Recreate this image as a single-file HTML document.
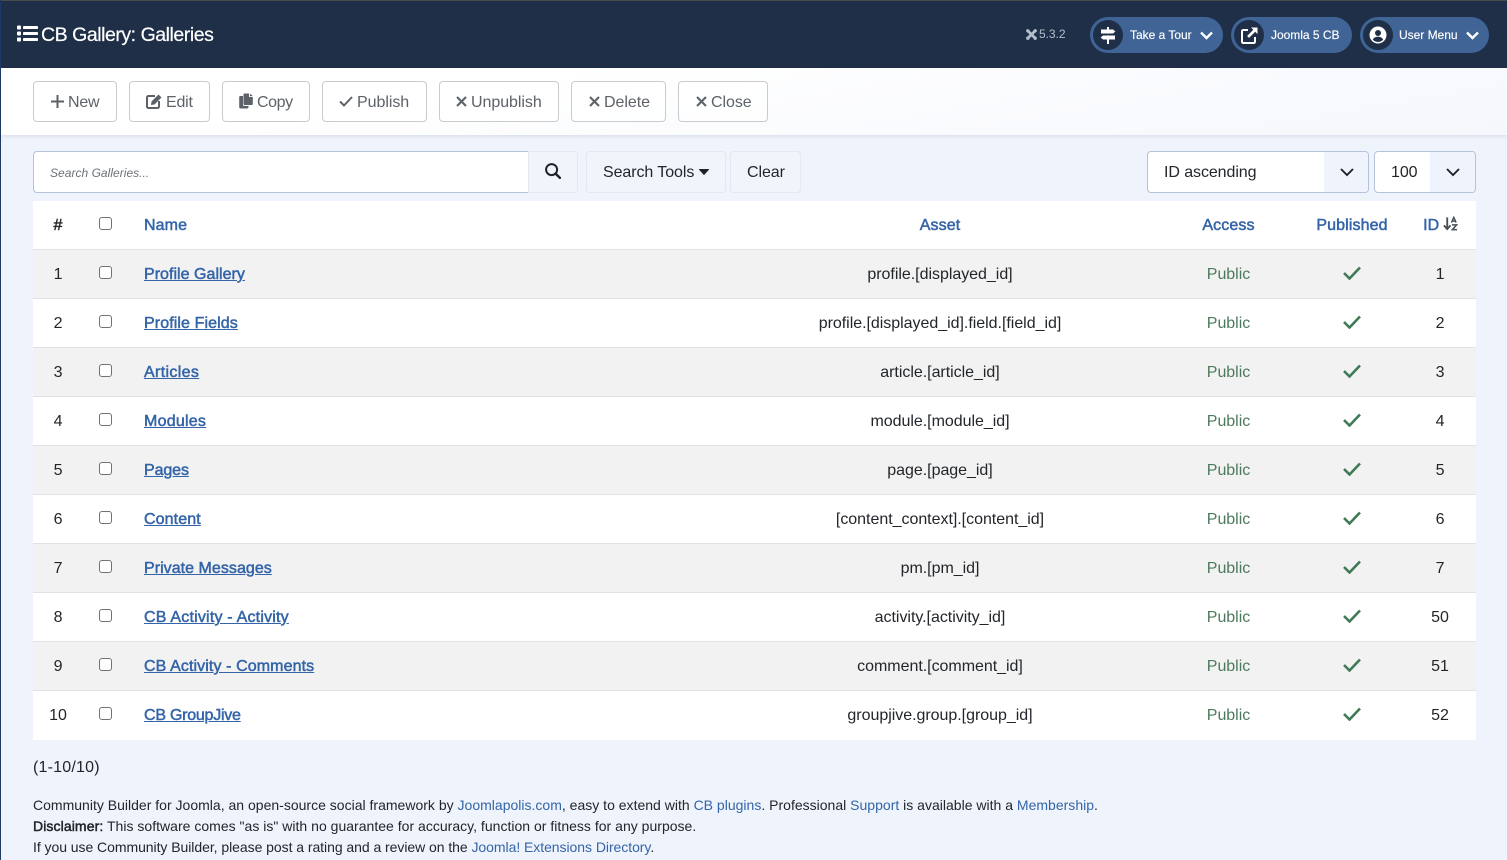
<!DOCTYPE html>
<html lang="en"><head><meta charset="utf-8"><title>CB Gallery: Galleries</title>
<style>
*{box-sizing:border-box}
html,body{margin:0;padding:0}
body{width:1507px;height:860px;overflow:hidden;position:relative;background:#eff3fb;font-family:"Liberation Sans",sans-serif;font-size:16px;color:#22262a}
.a{position:absolute;white-space:nowrap}
svg{position:absolute;display:block}
#edge{left:0;top:0;width:1px;height:860px;background:#1f3a64}
#hdr{left:0;top:0;width:1507px;height:68px;background:#1e2f47;border-top:1px solid #4a4a4a}
#ttl{left:41px;top:23px;font-size:19.5px;line-height:24px;color:#fff;letter-spacing:-.46px;-webkit-text-stroke:.2px #fff}
#ver{left:1039px;top:27px;font-size:12px;line-height:15px;color:#b5bfcc;letter-spacing:-.05px}
.pill{top:17px;height:36px;border-radius:18px;background:#3f6495}
.pc{top:20px;width:30px;height:30px;border-radius:50%;background:#1e2f47}
.pt{top:28px;font-size:12px;line-height:15px;color:#fff;letter-spacing:-.02px;-webkit-text-stroke:.15px #fff}
#bar{left:1px;top:68px;width:1506px;height:67px;background:linear-gradient(170deg,#fff 30%,#f5f7fc 100%);box-shadow:0 1px 4px rgba(30,50,90,.12)}
.btn{top:81px;height:41px;border:1px solid #c8ccd0;border-radius:4px;background:rgba(255,255,255,.75)}
.bt{top:93px;line-height:19px;color:#5c6268;letter-spacing:-.05px}
#srch{left:33px;top:151px;width:496px;height:42px;background:#fff;border:1px solid #b4c2dc;border-right:1px solid #d8dfe9;border-radius:4px 0 0 4px}
#ph{left:50px;top:166px;font-size:12px;line-height:15px;font-style:italic;color:#6c7278;letter-spacing:.03px}
.gb{top:151px;height:42px;background:#f1f4fa;border:1px solid #e4e8f0;border-radius:4px;line-height:19px}
.gt{top:163px;line-height:19px;color:#22262a;letter-spacing:-.08px}
.sel{top:151px;height:42px;border:1px solid #b4c2dc;border-radius:4px;background:#fff;overflow:hidden}
.sel i{position:absolute;top:0;bottom:0;right:0;background:#eff3fb}
table{position:absolute;left:33px;top:200px;width:1443px;border-collapse:collapse;table-layout:fixed;background:#fff}
th,td{padding:2px 0 0;text-align:center;font-size:16px;line-height:19px;height:49px;border-bottom:1px solid #dfe3e7;letter-spacing:-.03px;font-weight:400;color:#22262a}
th{color:#3465a8;letter-spacing:.1px;-webkit-text-stroke:.5px #3465a8}
th.h{color:#22262a;-webkit-text-stroke:.5px #22262a}
tr:last-child td{border-bottom-color:#fff}
tbody tr:nth-child(odd) td{background:#f2f2f2}
td.l,th.l{text-align:left;padding-left:16px}
td a{color:#3465a8;letter-spacing:.1px;text-decoration:underline;-webkit-text-stroke:.5px #3465a8}
td.g{color:#4d7a5c}
td svg,th svg{position:relative;display:inline-block;vertical-align:middle;top:-2px}
.cb{display:inline-block;width:13px;height:13px;border:1px solid #6f7276;border-radius:3px;background:#fff;vertical-align:middle;position:relative;top:-2px;-webkit-text-stroke:0}
#strip{left:33px;top:200px;width:1443px;height:1px;background:#eff3fb}
#cnt{left:33px;top:758px;line-height:19px;letter-spacing:.2px}
.f{left:33px;font-size:14px;line-height:21px}
.f a{color:#3465a8;text-decoration:none}
.f b{font-weight:400;letter-spacing:.1px;-webkit-text-stroke:.5px #22262a}
</style></head><body>
<div class="a" id="hdr"></div>
<div class="a" id="edge"></div>
<svg style="left:17px;top:25px" width="21" height="17" viewBox="0 0 21 17"><g fill="#fff"><rect x="0" y="0.5" width="4" height="4" rx="1"/><rect x="0" y="6.5" width="4" height="4" rx="1"/><rect x="0" y="12.5" width="4" height="4" rx="1"/><rect x="6" y="1" width="15" height="3" rx=".8"/><rect x="6" y="7" width="15" height="3" rx=".8"/><rect x="6" y="13" width="15" height="3" rx=".8"/></g></svg>
<div class="a" id="ttl">CB Gallery: Galleries</div>
<svg style="left:1026px;top:29px" width="11" height="11" viewBox="0 0 11 11"><g stroke="#b5bfcc" stroke-width="2.800" stroke-linecap="round"><path d="M2.500 2.500l6 6M8.500 2.500l-6 6"/></g><g fill="#b5bfcc"><circle cx="1.800" cy="1.800" r="1.700"/><circle cx="9.200" cy="1.800" r="1.700"/><circle cx="1.800" cy="9.200" r="1.700"/><circle cx="9.200" cy="9.200" r="1.700"/></g></svg>
<div class="a" id="ver">5.3.2</div>

<div class="a pill" style="left:1090px;width:133px"></div>
<div class="a pc" style="left:1093px"></div>
<svg style="left:1100px;top:27px" width="16" height="17" viewBox="0 0 16 17"><g fill="#fff"><rect x="7" y="0" width="2" height="17"/><path d="M1 2.500h12l2.400 2-2.400 2H1z"/><path d="M15 8.500H3L.6 10.500l2.400 2h12z"/></g><rect x="0" y="6.600" width="16" height="1.800" fill="#1e2f47"/></svg>
<div class="a pt" style="left:1130px">Take a Tour</div>
<svg style="left:1200px;top:31px" width="13" height="9" viewBox="0 0 13 9"><path d="M1 1.500l5.500 5.500 5.500-5.500" fill="none" stroke="#fff" stroke-width="2.400"/></svg>

<div class="a pill" style="left:1231px;width:121px"></div>
<div class="a pc" style="left:1234px"></div>
<svg style="left:1241px;top:27px" width="17" height="17" viewBox="0 0 17 17"><path d="M7 3H2.200A1.200 1.200 0 0 0 1 4.200V14.800A1.200 1.200 0 0 0 2.200 16H12.800A1.200 1.200 0 0 0 14 14.800V10" fill="none" stroke="#fff" stroke-width="2"/><path d="M10 .5h6.500V7l-2.300-2.300-6.200 6.200-1.900-1.900 6.200-6.200z" fill="#fff"/></svg>
<div class="a pt" style="left:1271px">Joomla 5 CB</div>

<div class="a pill" style="left:1360px;width:129px"></div>
<div class="a pc" style="left:1363px"></div>
<svg style="left:1369px;top:26px" width="18" height="18" viewBox="0 0 18 18"><circle cx="9" cy="9" r="8.500" fill="#fff"/><circle cx="9" cy="7" r="3" fill="#1e2f47"/><path d="M3.800 13.800c1-2.300 3-3 5.200-3s4.200.7 5.200 3c-1.300 1.400-3.100 2.200-5.200 2.200s-3.900-.8-5.200-2.200z" fill="#1e2f47"/></svg>
<div class="a pt" style="left:1399px">User Menu</div>
<svg style="left:1466px;top:31px" width="13" height="9" viewBox="0 0 13 9"><path d="M1 1.500l5.500 5.500 5.500-5.500" fill="none" stroke="#fff" stroke-width="2.400"/></svg>

<div class="a" id="bar"></div>

<div class="a btn" style="left:33px;width:84px"></div>
<svg style="left:51px;top:95px" width="13" height="13" viewBox="0 0 13 13"><path d="M6.500 0v13M0 6.500h13" stroke="#5c6268" stroke-width="2"/></svg>
<div class="a bt" style="left:68px;letter-spacing:-.2px">New</div>

<div class="a btn" style="left:129px;width:81px"></div>
<svg style="left:146px;top:93px" width="17" height="16" viewBox="0 0 17 16"><path d="M9 3H2.400A1.400 1.400 0 0 0 1 4.400V13.600A1.400 1.400 0 0 0 2.400 15H11.600A1.400 1.400 0 0 0 13 13.600V8" fill="none" stroke="#5c6268" stroke-width="2"/><path d="M5.500 8.500l7-7 3 3-7 7-3.500.5z" fill="#5c6268"/></svg>
<div class="a bt" style="left:166px;letter-spacing:-.2px">Edit</div>

<div class="a btn" style="left:222px;width:88px"></div>
<svg style="left:239px;top:93px" width="14" height="16" viewBox="0 0 14 16"><path d="M4 10.500V3H1.200A1 1 0 0 0 .2 4v10a1.500 1.500 0 0 0 1.500 1.500H8A1.500 1.500 0 0 0 9.500 14v-1H5.500A1.500 1.500 0 0 1 4 11.500z" fill="#5c6268"/><path d="M5.500 .5h4.500v3.500h3.800v7a1 1 0 0 1-1 1H5.500a1 1 0 0 1-1-1V1.500a1 1 0 0 1 1-1z" fill="#5c6268"/><path d="M11 .5l2.800 2.600H11z" fill="#5c6268"/></svg>
<div class="a bt" style="left:257px;letter-spacing:-.4px">Copy</div>

<div class="a btn" style="left:322px;width:105px"></div>
<svg style="left:339px;top:96px" width="14" height="11" viewBox="0 0 14 11"><path d="M1 5.500l4 4 8-8.500" fill="none" stroke="#5c6268" stroke-width="2"/></svg>
<div class="a bt" style="left:357px">Publish</div>

<div class="a btn" style="left:439px;width:120px"></div>
<svg style="left:456px;top:96px" width="11" height="11" viewBox="0 0 11 11"><path d="M1 1l9 9M10 1l-9 9" fill="none" stroke="#5c6268" stroke-width="2.100"/></svg>
<div class="a bt" style="left:471px">Unpublish</div>

<div class="a btn" style="left:571px;width:95px"></div>
<svg style="left:589px;top:96px" width="11" height="11" viewBox="0 0 11 11"><path d="M1 1l9 9M10 1l-9 9" fill="none" stroke="#5c6268" stroke-width="2.100"/></svg>
<div class="a bt" style="left:604px">Delete</div>

<div class="a btn" style="left:678px;width:90px"></div>
<svg style="left:696px;top:96px" width="11" height="11" viewBox="0 0 11 11"><path d="M1 1l9 9M10 1l-9 9" fill="none" stroke="#5c6268" stroke-width="2.100"/></svg>
<div class="a bt" style="left:711px">Close</div>

<div class="a" id="srch"></div>
<div class="a" id="ph">Search Galleries...</div>
<div class="a gb" style="left:528px;width:50px;border-radius:0 4px 4px 0"></div>
<svg style="left:545px;top:163px" width="16" height="16" viewBox="0 0 16 16"><circle cx="6.600" cy="6.600" r="5.500" fill="none" stroke="#1f2327" stroke-width="2"/><path d="M10.600 10.600l4.300 4.300" stroke="#1f2327" stroke-width="2.400" stroke-linecap="round"/></svg>
<div class="a gb" style="left:586px;width:140px"></div>
<div class="a gt" style="left:603px">Search Tools</div>
<svg style="left:699px;top:169px" width="10" height="6" viewBox="0 0 10 6"><path d="M.6 0h8.800a.5.500 0 0 1 .4.900L5.400 5.700a.6.600 0 0 1-.8 0L.2.900A.5.500 0 0 1 .6 0z" fill="#1f2327"/></svg>
<div class="a gb" style="left:730px;width:71px"></div>
<div class="a gt" style="left:747px">Clear</div>

<div class="a sel" style="left:1147px;width:222px"><i style="width:44px"></i></div>
<div class="a gt" style="left:1164px">ID ascending</div>
<svg style="left:1340px;top:168px" width="14" height="9" viewBox="0 0 14 9"><path d="M1 1l6 6 6-6" fill="none" stroke="#1f2327" stroke-width="1.900"/></svg>
<div class="a sel" style="left:1374px;width:102px"><i style="width:45px"></i></div>
<div class="a gt" style="left:1391px">100</div>
<svg style="left:1446px;top:168px" width="14" height="9" viewBox="0 0 14 9"><path d="M1 1l6 6 6-6" fill="none" stroke="#1f2327" stroke-width="1.900"/></svg>

<table>
<colgroup><col style="width:50px"><col style="width:45px"><col style="width:595px"><col style="width:434px"><col style="width:143px"><col style="width:104px"><col style="width:72px"></colgroup>
<thead><tr><th class="h">#</th><th><span class="cb"></span></th><th class="l">Name</th><th>Asset</th><th>Access</th><th>Published</th><th><span style="position:relative;left:1px">ID</span> <svg width="15" height="15" viewBox="0 0 16 15"><path d="M4.500 1v12M1 9.500l3.500 4 3.500-4" fill="none" stroke="#4a5058" stroke-width="2"/><path d="M9 6.500L11.500 1 14 6.500M10 5h3M9.500 9h5L10 14h5" fill="none" stroke="#4a5058" stroke-width="1.600"/></svg></th></tr></thead>
<tbody>
<tr><td>1</td><td><span class="cb"></span></td><td class="l"><a style="letter-spacing:.03px">Profile Gallery</a></td><td>profile.[displayed_id]</td><td class="g">Public</td><td><svg width="18" height="14" viewBox="0 0 18 14"><path d="M1 7l5.500 5.500L17 1.500" fill="none" stroke="#3f7a56" stroke-width="2.600"/></svg></td><td>1</td></tr>
<tr><td>2</td><td><span class="cb"></span></td><td class="l"><a>Profile Fields</a></td><td>profile.[displayed_id].field.[field_id]</td><td class="g">Public</td><td><svg width="18" height="14" viewBox="0 0 18 14"><path d="M1 7l5.500 5.500L17 1.500" fill="none" stroke="#3f7a56" stroke-width="2.600"/></svg></td><td>2</td></tr>
<tr><td>3</td><td><span class="cb"></span></td><td class="l"><a style="letter-spacing:.35px">Articles</a></td><td>article.[article_id]</td><td class="g">Public</td><td><svg width="18" height="14" viewBox="0 0 18 14"><path d="M1 7l5.500 5.500L17 1.500" fill="none" stroke="#3f7a56" stroke-width="2.600"/></svg></td><td>3</td></tr>
<tr><td>4</td><td><span class="cb"></span></td><td class="l"><a style="letter-spacing:.24px">Modules</a></td><td>module.[module_id]</td><td class="g">Public</td><td><svg width="18" height="14" viewBox="0 0 18 14"><path d="M1 7l5.500 5.500L17 1.500" fill="none" stroke="#3f7a56" stroke-width="2.600"/></svg></td><td>4</td></tr>
<tr><td>5</td><td><span class="cb"></span></td><td class="l"><a style="letter-spacing:-.1px">Pages</a></td><td>page.[page_id]</td><td class="g">Public</td><td><svg width="18" height="14" viewBox="0 0 18 14"><path d="M1 7l5.500 5.500L17 1.500" fill="none" stroke="#3f7a56" stroke-width="2.600"/></svg></td><td>5</td></tr>
<tr><td>6</td><td><span class="cb"></span></td><td class="l"><a>Content</a></td><td>[content_context].[content_id]</td><td class="g">Public</td><td><svg width="18" height="14" viewBox="0 0 18 14"><path d="M1 7l5.500 5.500L17 1.500" fill="none" stroke="#3f7a56" stroke-width="2.600"/></svg></td><td>6</td></tr>
<tr><td>7</td><td><span class="cb"></span></td><td class="l"><a style="letter-spacing:.04px">Private Messages</a></td><td>pm.[pm_id]</td><td class="g">Public</td><td><svg width="18" height="14" viewBox="0 0 18 14"><path d="M1 7l5.500 5.500L17 1.500" fill="none" stroke="#3f7a56" stroke-width="2.600"/></svg></td><td>7</td></tr>
<tr><td>8</td><td><span class="cb"></span></td><td class="l"><a style="letter-spacing:.2px">CB Activity - Activity</a></td><td>activity.[activity_id]</td><td class="g">Public</td><td><svg width="18" height="14" viewBox="0 0 18 14"><path d="M1 7l5.500 5.500L17 1.500" fill="none" stroke="#3f7a56" stroke-width="2.600"/></svg></td><td>50</td></tr>
<tr><td>9</td><td><span class="cb"></span></td><td class="l"><a>CB Activity - Comments</a></td><td>comment.[comment_id]</td><td class="g">Public</td><td><svg width="18" height="14" viewBox="0 0 18 14"><path d="M1 7l5.500 5.500L17 1.500" fill="none" stroke="#3f7a56" stroke-width="2.600"/></svg></td><td>51</td></tr>
<tr><td>10</td><td><span class="cb"></span></td><td class="l"><a style="letter-spacing:-.24px">CB GroupJive</a></td><td>groupjive.group.[group_id]</td><td class="g">Public</td><td><svg width="18" height="14" viewBox="0 0 18 14"><path d="M1 7l5.500 5.500L17 1.500" fill="none" stroke="#3f7a56" stroke-width="2.600"/></svg></td><td>52</td></tr>
</tbody></table>
<div class="a" id="strip"></div>

<div class="a" id="cnt">(1-10/10)</div>
<div class="a f" style="top:795px;letter-spacing:.007px">Community Builder for Joomla, an open-source social framework by <a>Joomlapolis.com</a>, easy to extend with <a>CB plugins</a>. Professional <a>Support</a> is available with a <a>Membership</a>.</div>
<div class="a f" style="top:816px;letter-spacing:.015px"><b>Disclaimer:</b> This software comes "as is" with no guarantee for accuracy, function or fitness for any purpose.</div>
<div class="a f" style="top:837px;letter-spacing:-.05px">If you use Community Builder, please post a rating and a review on the <a>Joomla! Extensions Directory</a>.</div>
</body></html>
